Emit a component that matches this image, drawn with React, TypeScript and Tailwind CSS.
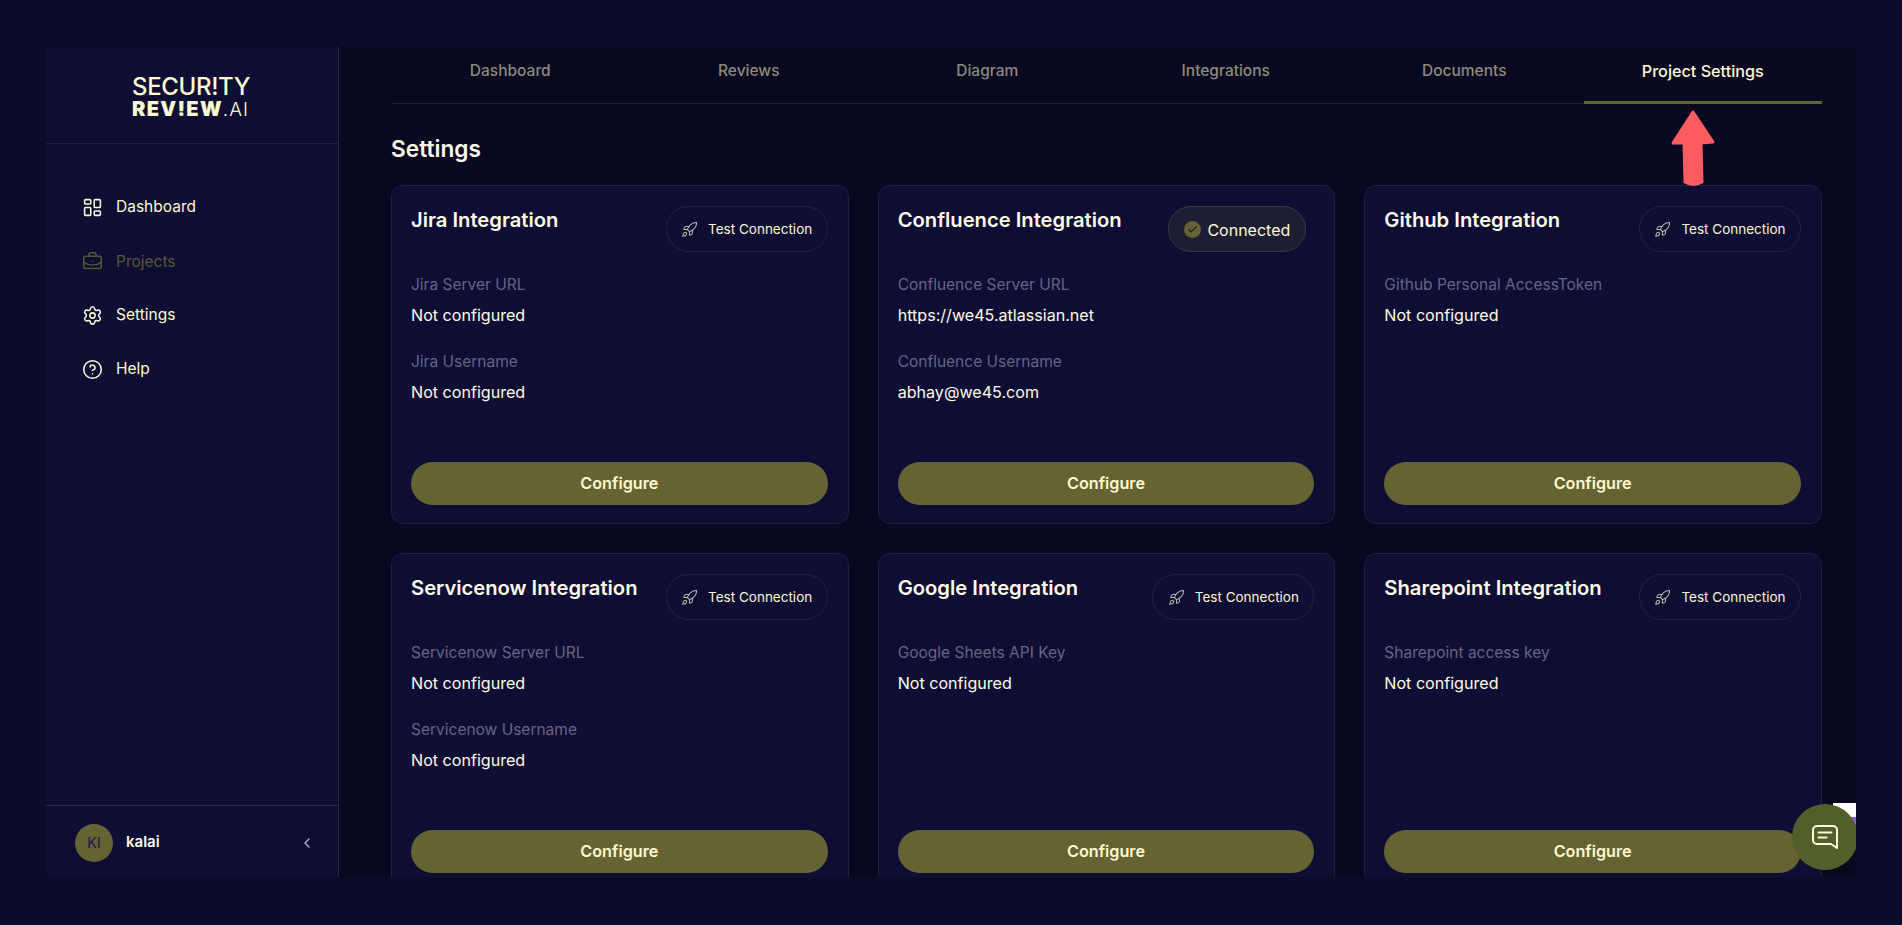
import { BriefcaseBusiness, ChevronLeft, CircleHelp, Rocket, Settings, LayoutDashboard, Check } from "lucide-react";

function Tab({ label, active }: { label: string; active?: boolean }) {
  return (
    <div
      className={
        active
          ? "-mb-px flex flex-1 items-center justify-center border-b-[3px] border-[#666333] pb-[6px] text-[16.2px] font-medium text-[#fdf9d0]"
          : "flex flex-1 items-center justify-center pb-[8px] text-[15.5px] font-medium text-[#8c8b79]"
      }
    >
      {label}
    </div>
  );
}

function NavItem({ icon, label, dim }: { icon: React.ReactNode; label: string; dim?: boolean }) {
  return (
    <div className={dim ? "flex h-[54px] items-center gap-[13px] pt-[1px] text-[#5a5830]" : "flex h-[54px] items-center gap-[13px] text-[#fdf9d0]"}>
      {icon}
      <span className="text-[15.5px] leading-6">{label}</span>
    </div>
  );
}

function Field({ label, value }: { label: string; value: string }) {
  return (
    <div>
      <div className="text-[15.5px] leading-6 text-[#666584]">{label}</div>
      <div className="mt-[6px] text-[16.1px] leading-6 text-[#fefce8]">{value}</div>
    </div>
  );
}

function TestButton() {
  return (
    <div className="flex h-[46px] w-[162px] shrink-0 items-center justify-center gap-[10px] rounded-full border border-[#23233f] text-[13.5px] text-[#fdf9d0]">
      <Rocket size={17} strokeWidth={1.5} className="text-[#b9b8a8]" />
      Test Connection
    </div>
  );
}

function ConnectedBadge() {
  return (
    <div className="mr-[8px] flex h-[46px] w-[138px] shrink-0 items-center justify-center gap-[6px] rounded-full border border-[#3a3a3a] bg-[#1d1d33] pt-[1px] text-[16px] text-[#fdf9d0]">
      <span className="flex h-[17px] w-[17px] items-center justify-center rounded-full bg-[#666333]">
        <Check size={11} strokeWidth={2.5} className="text-[#16163a]" />
      </span>
      Connected
    </div>
  );
}

function Card({
  title,
  fields,
  connected,
}: {
  title: string;
  fields: [string, string][];
  connected?: boolean;
}) {
  return (
    <div className="flex h-[339px] flex-col rounded-[12px] border border-[#20203f] bg-[#0e0d33] pt-5 pr-5 pb-[18px] pl-[19px]">
      <div className="flex h-[46px] items-start justify-between">
        <div className="text-[20.2px] leading-7 font-semibold text-[#fefce8]">{title}</div>
        {connected ? <ConnectedBadge /> : <TestButton />}
      </div>
      <div className="mt-[21px] flex flex-col gap-[23px]">
        {fields.map(([l, v]) => (
          <Field key={l} label={l} value={v} />
        ))}
      </div>
      <div className="mt-auto flex h-[43px] items-center justify-center rounded-full bg-[#666333] text-[16.2px] font-semibold text-[#fdf9d0]">
        Configure
      </div>
    </div>
  );
}

const NC = "Not configured";

export default function App() {
  return (
    <div
      className="relative h-[925px] w-[1902px] overflow-hidden bg-[#0b0b2a] px-[46px] pt-[47px] pb-[48px] text-[#fdf9d0]"
      style={{ fontFamily: "Inter, 'Liberation Sans', sans-serif" }}
    >
      <div className="relative flex h-full overflow-hidden">
        <aside className="flex w-[293px] shrink-0 flex-col border-r border-[#2a2a48] bg-[#0e0d33]">
          <div className="flex h-[97px] flex-col border-b border-[#20203f] pt-[27px] pl-[86px] text-[#fdf9d0]">
            <div className="text-[24px] leading-[26px] font-medium tracking-[-0.35px]">SECUR!TY</div>
            <div className="text-[20px] leading-[19px] font-black tracking-[1.3px]">
              REV!EW<span className="text-[19px] font-light tracking-[1px]">.AI</span>
            </div>
          </div>
          <nav className="flex flex-1 flex-col pt-[36px] pl-[36px]">
            <NavItem icon={<LayoutDashboard size={21} strokeWidth={1.75} className="-scale-x-100" />} label="Dashboard" />
            <NavItem icon={<BriefcaseBusiness size={21} strokeWidth={1.75} />} label="Projects" dim />
            <NavItem icon={<Settings size={21} strokeWidth={1.75} />} label="Settings" />
            <NavItem icon={<CircleHelp size={21} strokeWidth={1.75} />} label="Help" />
          </nav>
          <div className="flex h-[72px] items-center border-t border-[#2a2a48] pt-[2px] pr-[23px] pl-[29px]">
            <div className="flex h-[38px] w-[38px] items-center justify-center rounded-full bg-[#666333] text-[14px] font-medium text-[#22224a]">
              KI
            </div>
            <span className="ml-[13px] flex-1 text-[15px] font-semibold text-[#fefce8]">kalai</span>
            <ChevronLeft size={16} className="text-[#b5b5c5]" />
          </div>
        </aside>
        <main className="min-w-0 flex-1 bg-[#080820] pr-[34px] pl-[52px]">
          <div className="flex h-[57px] border-b border-[#20203a]">
            <Tab label="Dashboard" />
            <Tab label="Reviews" />
            <Tab label="Diagram" />
            <Tab label="Integrations" />
            <Tab label="Documents" />
            <Tab label="Project Settings" active />
          </div>
          <h1 className="mt-[31px] text-[22.7px] leading-7 font-semibold text-[#fefce8]">Settings</h1>
          <div className="mt-[22px] grid grid-cols-3 gap-x-[29px] gap-y-[29px]">
            <Card title="Jira Integration" fields={[["Jira Server URL", NC], ["Jira Username", NC]]} />
            <Card
              title="Confluence Integration"
              connected
              fields={[["Confluence Server URL", "https://we45.atlassian.net"], ["Confluence Username", "abhay@we45.com"]]}
            />
            <Card title="Github Integration" fields={[["Github Personal AccessToken", NC]]} />
            <Card title="Servicenow Integration" fields={[["Servicenow Server URL", NC], ["Servicenow Username", NC]]} />
            <Card title="Google Integration" fields={[["Google Sheets API Key", NC]]} />
            <Card title="Sharepoint Integration" fields={[["Sharepoint access key", NC]]} />
          </div>
        </main>
        <div className="absolute top-[756px] right-0 flex h-[40px] w-[23px] flex-col">
          <div className="h-[14px] bg-white" />
          <div className="flex-1 bg-[#8b5cf6]" />
        </div>
        <div className="absolute top-[757px] right-[-2px] flex h-[66px] w-[66px] items-center justify-center rounded-full bg-[#535f2a]">
          <svg width="28" height="26" viewBox="0 0 28 26" fill="none" stroke="#fdf9d0" strokeWidth="2" strokeLinecap="round" strokeLinejoin="round">
            <path d="M6 2h16a4 4 0 0 1 4 4v18l-6-4H6a4 4 0 0 1-4-4V6a4 4 0 0 1 4-4z" />
            <path d="M7.5 8.5h13" />
            <path d="M7.5 13.5h8" />
          </svg>
        </div>
      </div>
      <svg className="absolute top-[109px] left-[1668px]" width="50" height="78" viewBox="0 0 50 78">
        <path
          d="M25 3 L45 33 L33 34 L34 73 Q25 78 17 73 L16 34 L5 34 Z"
          fill="#fd5c63"
          stroke="#fd5c63"
          strokeWidth="3"
          strokeLinejoin="round"
        />
      </svg>
    </div>
  );
}
